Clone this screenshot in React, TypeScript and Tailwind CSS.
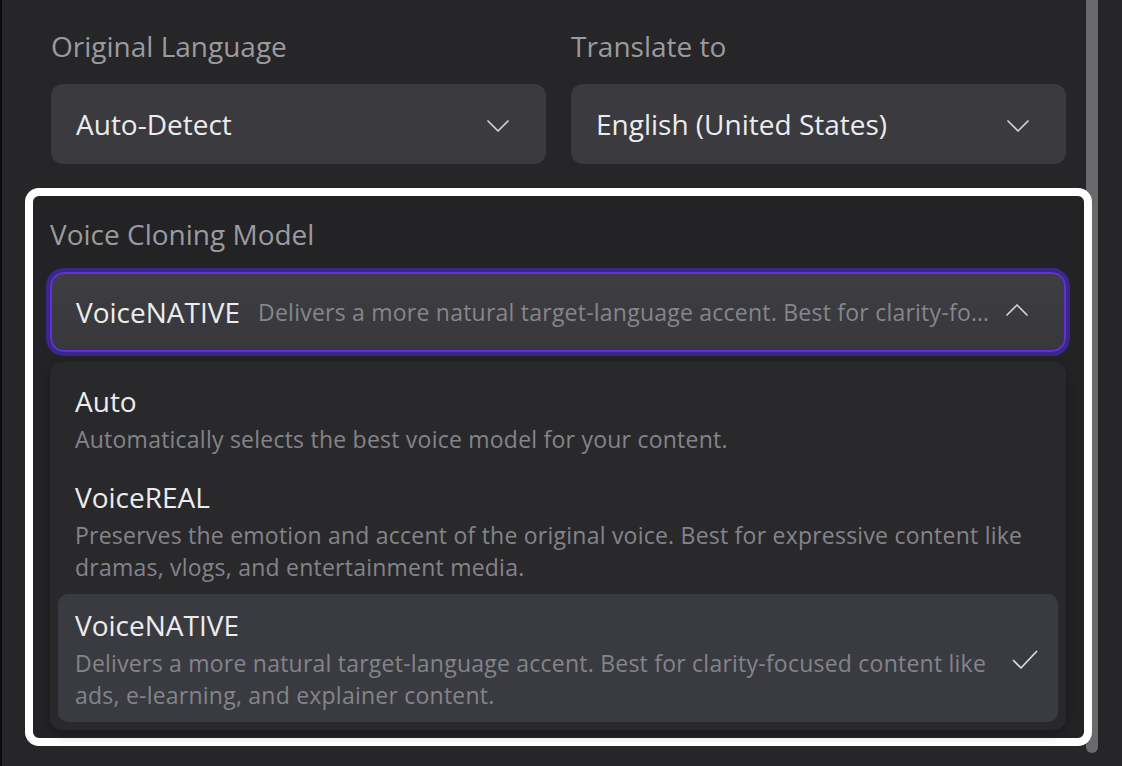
const font = { fontFamily: '"Open Sans", "Noto Sans", sans-serif' };

function Chevron({ up = false }: { up?: boolean }) {
  return (
    <svg width="22" height="12" viewBox="0 0 22 12" fill="none" className="shrink-0" aria-hidden>
      <path
        d={up ? "M1 11L11 1L21 11" : "M1 1L11 11L21 1"}
        stroke="#d4d4d7"
        strokeWidth="1.7"
        strokeLinecap="round"
        strokeLinejoin="round"
      />
    </svg>
  );
}

function CheckMark() {
  return (
    <svg width="26" height="20" viewBox="0 0 26 20" fill="none" className="shrink-0" aria-hidden>
      <path d="M1.5 10.5L9 18L24.5 1.5" stroke="#dcdcdf" strokeWidth="1.7" strokeLinecap="round" strokeLinejoin="round" />
    </svg>
  );
}

function Select({ value }: { value: string }) {
  return (
    <div className="flex h-[80px] items-center justify-between rounded-[12px] bg-[#3a3a3f] pl-[25px] pr-[37px]">
      <span className="text-[28px] leading-[32px] text-[#ececee]">{value}</span>
      <div className="pt-[4px]">
        <Chevron />
      </div>
    </div>
  );
}

const models = [
  {
    name: "Auto",
    desc: "Automatically selects the best voice model for your content.",
  },
  {
    name: "VoiceREAL",
    desc: "Preserves the emotion and accent of the original voice. Best for expressive content like dramas, vlogs, and entertainment media.",
  },
  {
    name: "VoiceNATIVE",
    desc: "Delivers a more natural target-language accent. Best for clarity-focused content like ads, e-learning, and explainer content.",
    selected: true,
  },
];

export default function App() {
  return (
    <div className="flex h-[766px] w-[1122px] overflow-hidden bg-[#262628]" style={font}>
      <div className="w-[2px] bg-[#0b0b0c]" />

      <div className="w-[1084px] pl-[49px] pr-[20px] pt-[30px]">
        <div className="grid grid-cols-2 gap-[25px]">
          <div>
            <div className="text-[28px] leading-[32px] text-[#9b9b9f]">Original Language</div>
            <div className="mt-[22px]">
              <Select value="Auto-Detect" />
            </div>
          </div>
          <div>
            <div className="text-[28px] leading-[32px] text-[#9b9b9f]">Translate to</div>
            <div className="mt-[22px]">
              <Select value="English (United States)" />
            </div>
          </div>
        </div>

        <div className="relative z-10 mt-[24px] -ml-[26px] -mr-[26px] rounded-[14px] border-[8px] border-white bg-[#232326] pl-[17px] pr-[18px] pt-[22px] pb-[8px]">
          <div className="text-[28px] leading-[32px] text-[#9b9b9f]">Voice Cloning Model</div>

          <div className="mt-[22px] flex h-[80px] items-center rounded-[14px] border-2 border-[#5b2fe2] bg-gradient-to-b from-[#3d3d42] to-[#37373c] pl-[24px] pr-[36px] shadow-[0_0_0_4px_#3c2688]">
            <span className="shrink-0 text-[28px] leading-[32px] text-[#ececee]">VoiceNATIVE</span>
            <span className="ml-[18px] min-w-0 flex-1 truncate text-[23px] leading-[32px] tracking-[0.01em] text-[#86868b]">
              Delivers a more natural target-language accent. Best for clarity-focused content like ads, e-learning, and explainer content.
            </span>
            <div className="ml-[16px] pb-[4px]">
              <Chevron up />
            </div>
          </div>

          <div className="mt-[10px] rounded-[12px] bg-[#29292c] p-[8px] shadow-[0_4px_12px_rgba(0,0,0,0.25)]">
            {models.map((m) => (
              <div
                key={m.name}
                className={`flex items-center rounded-[10px] pl-[17px] pr-[20px] pt-[15px] pb-[11px] ${
                  m.selected ? "bg-[#3a3b40]" : ""
                }`}
              >
                <div className="min-w-0 flex-1">
                  <div className="text-[28px] leading-[32px] text-[#ececee]">{m.name}</div>
                  <div className="mt-[6px] text-[23px] leading-[32px] tracking-[0.01em] text-[#84848a]">{m.desc}</div>
                </div>
                {m.selected && (
                  <div className="ml-[6px]">
                    <CheckMark />
                  </div>
                )}
              </div>
            ))}
          </div>
        </div>
      </div>

      <div className="w-[12px] shrink-0">
        <div className="h-[753px] rounded-b-full bg-[#69696c]" />
      </div>
      <div className="flex-1" />
    </div>
  );
}
